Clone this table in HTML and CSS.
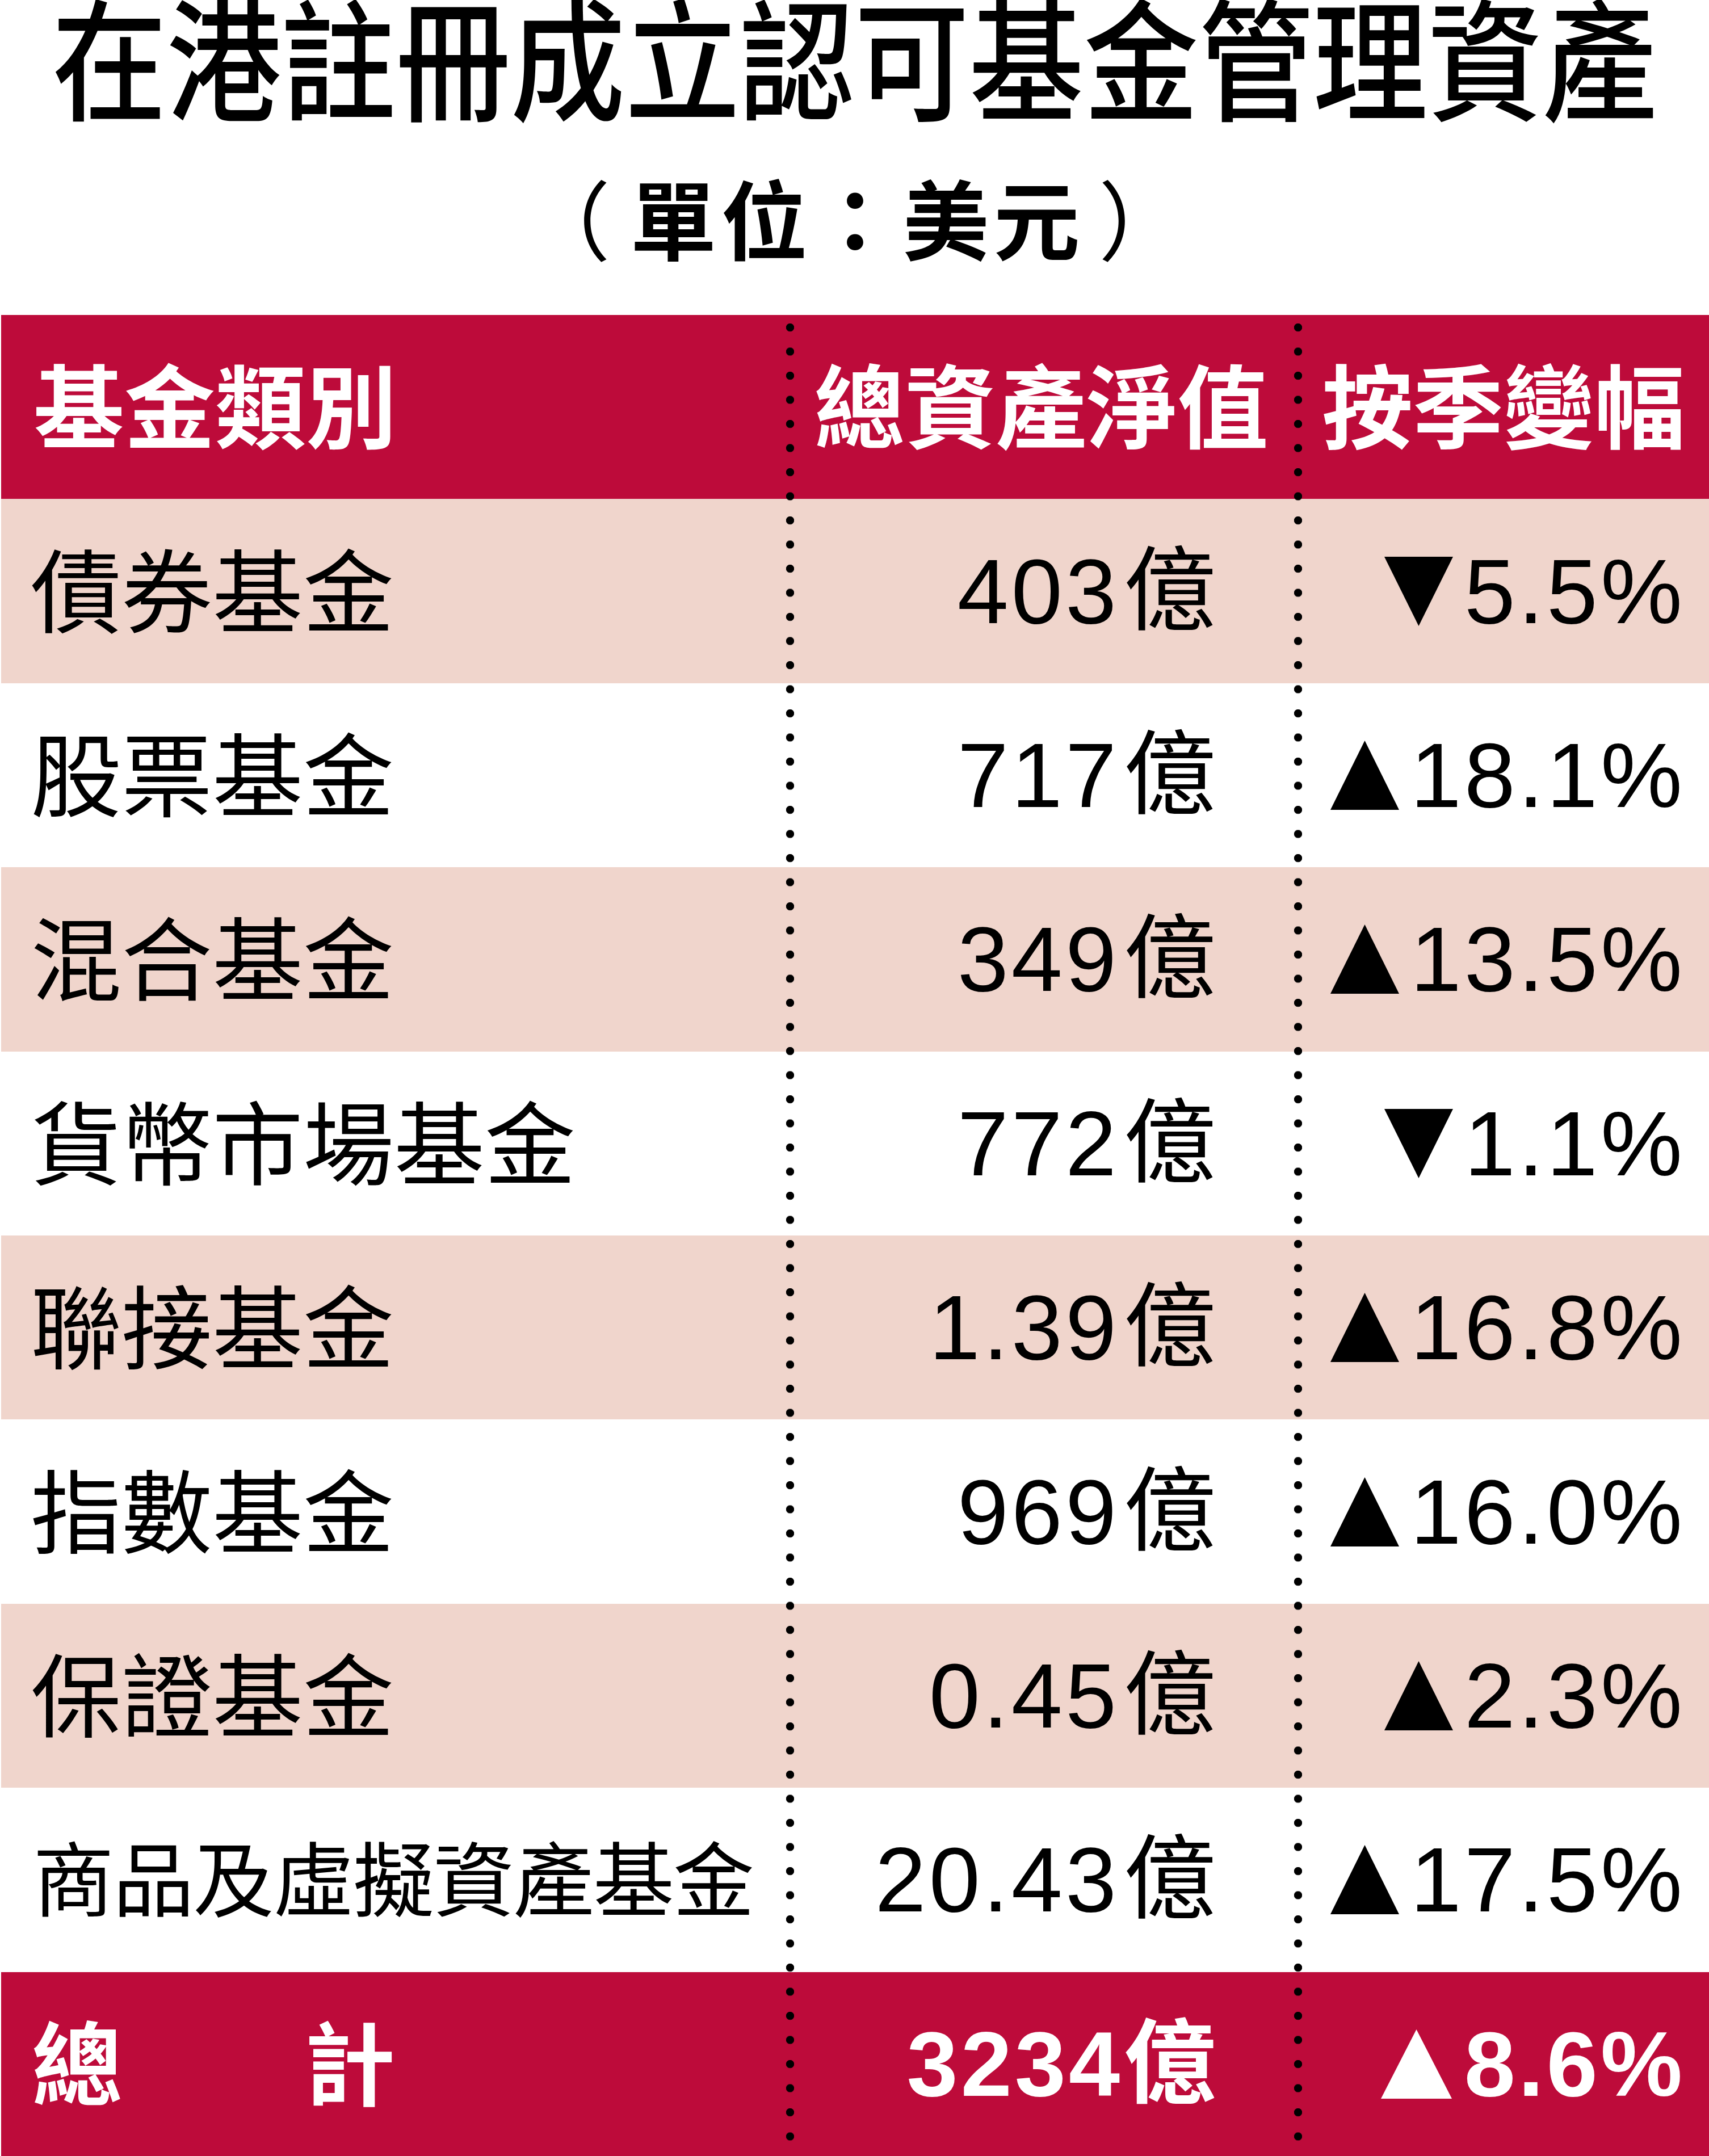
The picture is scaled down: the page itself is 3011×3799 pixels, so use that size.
FILE: index.html
```html
<!DOCTYPE html>
<html lang="zh-Hant">
<head>
<meta charset="utf-8">
<title>在港註冊成立認可基金管理資產</title>
<link rel="stylesheet" href="styles.css">
</head>
<body>
<div class="page">
  <h1 class="title">在港註冊成立認可基金管理資產</h1>
  <p class="subtitle"><span class="paren open">（</span><span class="sub-text">單位：美元</span><span class="paren close">）</span></p>
  <div class="table">
    <div class="row head">
      <div class="c1">基金類別</div>
      <div class="c2">總資產淨值</div>
      <div class="c3">按季變幅</div>
    </div>
    <div class="row pink">
      <div class="c1">債券基金</div>
      <div class="c2">403<span class="unit">億</span></div>
      <div class="c3"><svg class="tri" viewBox="0 0 121 122"><polygon points="0,0 121,0 60.5,122"/></svg>5.5%</div>
    </div>
    <div class="row">
      <div class="c1">股票基金</div>
      <div class="c2">717<span class="unit">億</span></div>
      <div class="c3"><svg class="tri" viewBox="0 0 121 122"><polygon points="60.5,0 121,122 0,122"/></svg>18.1%</div>
    </div>
    <div class="row pink">
      <div class="c1">混合基金</div>
      <div class="c2">349<span class="unit">億</span></div>
      <div class="c3"><svg class="tri" viewBox="0 0 121 122"><polygon points="60.5,0 121,122 0,122"/></svg>13.5%</div>
    </div>
    <div class="row">
      <div class="c1">貨幣市場基金</div>
      <div class="c2">772<span class="unit">億</span></div>
      <div class="c3"><svg class="tri" viewBox="0 0 121 122"><polygon points="0,0 121,0 60.5,122"/></svg>1.1%</div>
    </div>
    <div class="row pink">
      <div class="c1">聯接基金</div>
      <div class="c2">1.39<span class="unit">億</span></div>
      <div class="c3"><svg class="tri" viewBox="0 0 121 122"><polygon points="60.5,0 121,122 0,122"/></svg>16.8%</div>
    </div>
    <div class="row">
      <div class="c1">指數基金</div>
      <div class="c2">969<span class="unit">億</span></div>
      <div class="c3"><svg class="tri" viewBox="0 0 121 122"><polygon points="60.5,0 121,122 0,122"/></svg>16.0%</div>
    </div>
    <div class="row pink">
      <div class="c1">保證基金</div>
      <div class="c2">0.45<span class="unit">億</span></div>
      <div class="c3"><svg class="tri" viewBox="0 0 121 122"><polygon points="60.5,0 121,122 0,122"/></svg>2.3%</div>
    </div>
    <div class="row">
      <div class="c1 long">商品及虛擬資產基金</div>
      <div class="c2">20.43<span class="unit">億</span></div>
      <div class="c3"><svg class="tri" viewBox="0 0 121 122"><polygon points="60.5,0 121,122 0,122"/></svg>17.5%</div>
    </div>
    <div class="row total">
      <div class="c1">總　　計</div>
      <div class="c2">3234<span class="unit">億</span></div>
      <div class="c3"><svg class="tri" viewBox="0 0 125 122"><polygon points="62.5,0 125,122 0,122"/></svg>8.6%</div>
    </div>
  </div>
</div>
</body>
</html>
```

FILE: styles.css
```css
html, body {
  margin: 0;
  padding: 0;
  background: #ffffff;
}

.page {
  width: 3011px;
  font-family: "Noto Sans CJK TC", "Noto Sans CJK SC", sans-serif;
  color: #000000;
}

.title {
  margin: 0;
  height: 208px;
  font-size: 202px;
  line-height: 192px;
  font-weight: 500;
  text-align: center;
  white-space: nowrap;
  transform: scale(1, 1.15);
  transform-origin: 50% 112px;
}

.subtitle {
  margin: 0;
  height: 347px;
  font-size: 152px;
  line-height: 347px;
  font-weight: 700;
  text-align: center;
  white-space: nowrap;
}

.sub-text {
  letter-spacing: 8px;
}

.paren {
  font-weight: 400;
}

.paren.open { margin-right: 35px; }
.paren.close { margin-left: 25px; }

.table {
  position: relative;
  margin-left: 2px;
  width: 3009px;
  display: flex;
  flex-direction: column;
}

.table::before,
.table::after {
  content: "";
  position: absolute;
  top: 0;
  bottom: 0;
  width: 14px;
  background-image: radial-gradient(circle at 7px 7px, #000 6.8px, rgba(0,0,0,0) 7.5px);
  background-size: 14px 42.5px;
  background-repeat: repeat-y;
  background-position: 0 15px;
  z-index: 2;
}

.table::before { left: 1383px; }
.table::after { left: 2278px; }

.row {
  display: grid;
  grid-template-columns: 1390px 895px 724px;
  height: 324.4px;
  background: #ffffff;
}

.row.pink { background: #f0d5cc; }

.row.head,
.row.total {
  background: #bd0b3a;
  color: #ffffff;
}

.c1, .c2, .c3 {
  display: flex;
  align-items: center;
  line-height: 1;
  white-space: nowrap;
}

.c1 {
  padding-left: 52px;
  padding-bottom: 18px;
  font-size: 160px;
  font-weight: 400;
}

.c1.long {
  font-size: 143px;
  letter-spacing: -2px;
  padding-left: 56px;
}

.c2, .c3 {
  justify-content: flex-end;
  font-family: "Liberation Sans", "Noto Sans CJK TC", sans-serif;
  font-size: 162px;
  font-weight: 400;
  letter-spacing: 5px;
}

.c2 { padding-right: 140px; }
.c3 { padding-right: 42px; }

.unit {
  padding-left: 8px;
}

.tri {
  width: 121px;
  height: 122px;
  margin-right: 20px;
  fill: #000000;
  vertical-align: baseline;
  flex: none;
}

.head .c1, .head .c2, .head .c3 {
  font-family: "Noto Sans CJK TC", "Noto Sans CJK SC", sans-serif;
  font-size: 160px;
  font-weight: 700;
  letter-spacing: 0;
  padding-bottom: 18px;
}

.head .c1 { padding-left: 57px; }
.head .c2 { justify-content: center; padding-right: 10px; }
.head .c3 { justify-content: center; padding-right: 0; }

.total .c1 { font-weight: 700; padding-left: 54px; }
.total .c2, .total .c3 { font-weight: 700; }
.total .unit { padding-left: 2px; }
.total .tri { width: 125px; fill: #ffffff; margin-right: 22px; }
```
